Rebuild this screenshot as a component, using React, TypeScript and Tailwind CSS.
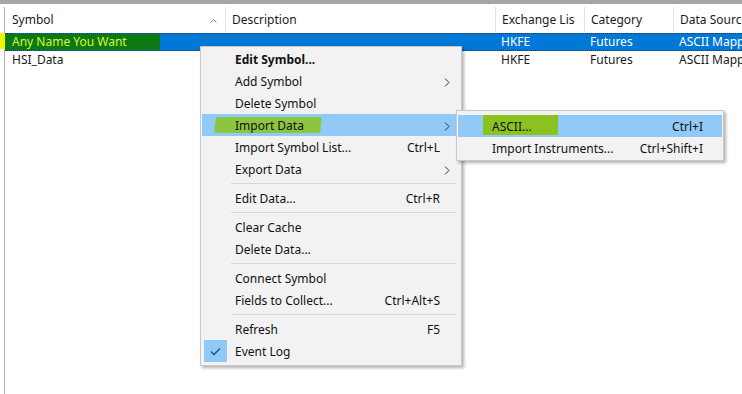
import React from "react";

const font = { fontFamily: '"Noto Sans", "Liberation Sans", sans-serif' };

type Item =
  | { sep: true }
  | { label: string; shortcut?: string; arrow?: boolean; bold?: boolean; active?: boolean; checked?: boolean; brush?: boolean };

const items: Item[] = [
  { label: "Edit Symbol...", bold: true },
  { label: "Add Symbol", arrow: true },
  { label: "Delete Symbol" },
  { label: "Import Data", arrow: true, active: true, brush: true },
  { label: "Import Symbol List...", shortcut: "Ctrl+L" },
  { label: "Export Data", arrow: true },
  { sep: true },
  { label: "Edit Data...", shortcut: "Ctrl+R" },
  { sep: true },
  { label: "Clear Cache" },
  { label: "Delete Data..." },
  { sep: true },
  { label: "Connect Symbol" },
  { label: "Fields to Collect...", shortcut: "Ctrl+Alt+S" },
  { sep: true },
  { label: "Refresh", shortcut: "F5" },
  { label: "Event Log", checked: true },
];

function Chevron() {
  return (
    <svg width="6" height="9" viewBox="0 0 6 9" className="block">
      <path d="M1 0.5 L5 4.5 L1 8.5" fill="none" stroke="#333" strokeWidth="1" />
    </svg>
  );
}

function Header() {
  const cols = [
    { w: "w-[221px]", t: "Symbol", sort: true },
    { w: "w-[270px]", t: "Description" },
    { w: "w-[89px]", t: "Exchange Lis" },
    { w: "w-[89px]", t: "Category" },
    { w: "flex-1", t: "Data Source" },
  ];
  return (
    <div className="flex h-[25px] items-center text-[12px] text-[#1a1a1a]">
      {cols.map((c, i) => (
        <div
          key={i}
          className={`${c.w} h-full flex items-center overflow-hidden whitespace-nowrap ${i < 4 ? "border-r border-[#e3e3e3]" : ""} ${i === 0 ? "pl-[7px]" : "pl-[6px]"} relative`}
        >
          {c.t}
          {c.sort && (
            <svg width="7" height="4" viewBox="0 0 7 4" className="absolute left-[205px] top-[12px]">
              <path d="M0.5 3.5 L3.5 0.5 L6.5 3.5" fill="none" stroke="#888" strokeWidth="1" />
            </svg>
          )}
        </div>
      ))}
    </div>
  );
}

function Row({ cells, selected }: { cells: string[]; selected?: boolean }) {
  const widths = ["w-[221px]", "w-[270px]", "w-[89px]", "w-[89px]", "flex-1"];
  return (
    <div
      className={`relative flex h-[18px] items-center text-[12px] ${selected ? "bg-[#0078d7] text-white border-y border-dotted border-[#333]" : "text-[#1a1a1a]"}`}
    >
      {selected && <div className="absolute left-0 top-0 h-[16px] w-[155px] bg-[#0b7a12]" />}
      {cells.map((c, i) => (
        <div
          key={i}
          className={`${widths[i]} relative overflow-hidden whitespace-nowrap ${i === 0 ? "pl-[7px]" : "pl-[5px]"} ${selected && i === 0 ? "text-[#d9f53c]" : ""}`}
        >
          {c}
        </div>
      ))}
    </div>
  );
}

function Menu() {
  return (
    <div
      className="absolute left-[200px] top-[46px] w-[262px] bg-[#f2f2f2] border border-[#c8c8c8] pt-[1px] pb-[3px] pl-[1px] pr-[1px] text-[12px] text-[#111] shadow-[2px_2px_3px_rgba(0,0,0,0.3)]"
      style={font}
    >
      {items.map((it, i) =>
        "sep" in it ? (
          <div key={i} className="h-[7px] flex items-center pl-[29px] pr-[4px]">
            <div className="h-px w-full bg-[#d7d7d7]" />
          </div>
        ) : (
          <div
            key={i}
            className={`relative flex h-[22px] items-center ${it.active ? "bg-[#91c9f7]" : ""}`}
          >
            {it.checked && (
              <div className="absolute left-[2px] top-0 h-[22px] w-[23px] bg-[#90c8f6] flex items-center justify-center">
                <svg width="11" height="9" viewBox="0 0 11 9">
                  <path d="M1 4.5 L4 7.5 L10 1.5" fill="none" stroke="#2a4f7a" strokeWidth="1.4" />
                </svg>
              </div>
            )}
            {it.brush && (
              <div className="absolute left-[13px] top-[3px] h-[16px] w-[106px] bg-[#8cc63f] rounded-[2px] -skew-x-6" />
            )}
            <span className={`relative pl-[33px] pt-[2px] ${it.bold ? "font-bold" : ""}`}>{it.label}</span>
            <span className="flex-1" />
            {it.shortcut && <span className="relative pr-[20px] pt-[2px]">{it.shortcut}</span>}
            {it.arrow && (
              <span className="pr-[10px] pt-[2px]">
                <Chevron />
              </span>
            )}
          </div>
        )
      )}
    </div>
  );
}

function SubMenu() {
  return (
    <div
      className="absolute left-[456px] top-[110px] w-[268px] bg-[#f2f2f2] border border-[#c8c8c8] pt-[4px] pb-[1px] px-[1px] text-[12px] text-[#111] shadow-[2px_2px_3px_rgba(0,0,0,0.3)]"
      style={font}
    >
      <div className="relative flex h-[22px] items-center bg-[#91c9f7]">
        <div className="absolute left-[25px] top-[0px] h-[20px] w-[75px] bg-[#8cc21f]" />
        <span className="relative pl-[34px] pt-[2px]">ASCII...</span>
        <span className="flex-1" />
        <span className="pr-[19px] pt-[2px]">Ctrl+I</span>
      </div>
      <div className="relative flex h-[22px] items-center">
        <span className="pl-[34px] pt-[2px]">Import Instruments...</span>
        <span className="flex-1" />
        <span className="pr-[19px] pt-[2px]">Ctrl+Shift+I</span>
      </div>
    </div>
  );
}

export default function App() {
  return (
    <div className="relative w-[742px] h-[394px] overflow-hidden bg-white" style={font}>
      <div className="h-[4px] bg-[#a6a6a6]" />
      <div className="h-[3px]" />
      <div className="relative ml-[4px] h-[387px] border-l border-[#b4b4b4]">
        <Header />
        <div className="h-[1px]" />
        <div className="absolute -left-[5px] top-[26px] h-[16px] w-[6px] bg-[#f3f300]" />
        <Row selected cells={["Any Name You Want", "", "HKFE", "Futures", "ASCII Mapping"]} />
        <Row cells={["HSI_Data", "", "HKFE", "Futures", "ASCII Mapping"]} />
      </div>
      <Menu />
      <SubMenu />
    </div>
  );
}
